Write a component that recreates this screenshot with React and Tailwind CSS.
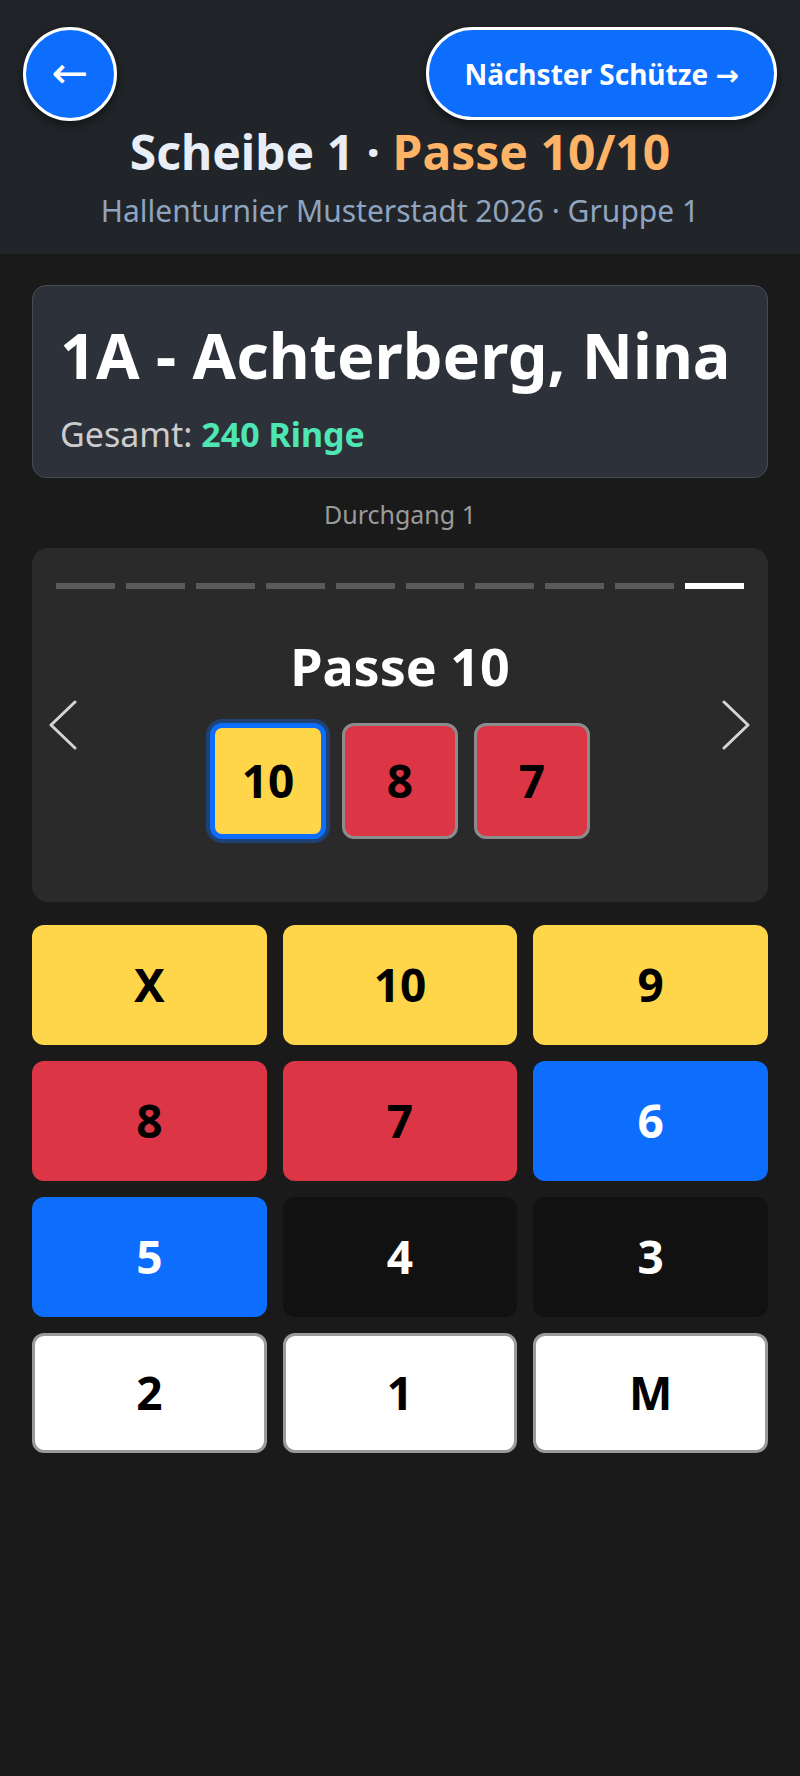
import React from 'react'

const font = { fontFamily: '"Noto Sans", "DejaVu Sans", sans-serif' }

const keys = [
  { label: 'X', cls: 'bg-[#ffd54a] text-black' },
  { label: '10', cls: 'bg-[#ffd54a] text-black' },
  { label: '9', cls: 'bg-[#ffd54a] text-black' },
  { label: '8', cls: 'bg-[#dc3545] text-black' },
  { label: '7', cls: 'bg-[#dc3545] text-black' },
  { label: '6', cls: 'bg-[#0d6efd] text-white' },
  { label: '5', cls: 'bg-[#0d6efd] text-white' },
  { label: '4', cls: 'bg-[#111111] text-white' },
  { label: '3', cls: 'bg-[#111111] text-white' },
  { label: '2', cls: 'bg-white text-black border-[3px] border-[#9a9a9a]' },
  { label: '1', cls: 'bg-white text-black border-[3px] border-[#9a9a9a]' },
  { label: 'M', cls: 'bg-white text-black border-[3px] border-[#9a9a9a]' },
]

function Chevron({ dir }) {
  const pts = dir === 'left' ? '27,2 3,25 27,48' : '2,2 26,25 2,48'
  return (
    <svg width="29" height="50" viewBox="0 0 29 50" fill="none">
      <polyline points={pts} stroke="#d4d4d4" strokeWidth="3" strokeLinecap="round" strokeLinejoin="round" />
    </svg>
  )
}

export default function App() {
  return (
    <div className="min-h-screen bg-[#1a1a1a]" style={font}>
      {/* Header */}
      <header className="bg-[#212529] h-[254px] px-[23px] pt-[27px]">
        <div className="flex items-start justify-between">
          <button className="w-[94px] h-[94px] rounded-full bg-[#0d6efd] border-[3px] border-white text-white flex items-center justify-center shadow-[0_4px_12px_rgba(0,0,0,0.5)]">
            <span className="text-[44px] leading-none font-normal -mt-[2px]" style={{ fontFamily: '"DejaVu Sans", sans-serif' }}>←</span>
          </button>
          <button className="h-[93px] px-[35px] rounded-full bg-[#0d6efd] border-[3px] border-white text-white text-[28px] font-bold flex items-center whitespace-nowrap shadow-[0_4px_12px_rgba(0,0,0,0.5)]">
            Nächster Schütze →
          </button>
        </div>
        <h1 className="text-center text-[48px] font-bold leading-[1.2] mt-[2px] text-[#e9eef6]">
          Scheibe 1 · <span className="text-[#ffb366]">Passe 10/10</span>
        </h1>
        <p className="text-center text-[30px] leading-[1.2] mt-[12px] text-[#8fa4bf]">
          Hallenturnier Musterstadt 2026 · Gruppe 1
        </p>
      </header>

      <main className="px-[32px] pt-[31px] pb-10">
        {/* Shooter card */}
        <section className="bg-[#2d3139] border border-[#474d56] rounded-[14px] px-[27px] pt-[31px] pb-[23px]">
          <h2 className="text-[63px] font-bold leading-[1.2] text-white whitespace-nowrap">1A - Achterberg, Nina</h2>
          <p className="text-[34px] leading-[1.2] mt-[21px] text-[#cccccc]">
            Gesamt: <span className="font-bold text-[#4ee6b2]">240 Ringe</span>
          </p>
        </section>

        <p className="text-center text-[25px] leading-[1.2] mt-[21px] text-[#9a9a9a]">Durchgang 1</p>

        {/* Passe card */}
        <section className="relative bg-[#2a2a2a] rounded-[16px] mt-[19px] px-[24px] pt-[35px] pb-[63px]">
          <div className="flex gap-[11px]">
            {Array.from({ length: 10 }).map((_, i) => (
              <div key={i} className={i === 9 ? 'flex-1 h-[6px] bg-white' : 'flex-1 h-[6px] bg-[#5a5a5a]'} />
            ))}
          </div>
          <h3 className="text-center text-[52px] font-bold leading-[1.2] mt-[46px] text-white">Passe 10</h3>
          <div className="flex justify-center gap-4 mt-[25px]">
            <div className="w-[116px] h-[116px] rounded-[12px] border-[5px] border-[#0d6efd] ring-4 ring-[#0d6efd]/35 bg-[#ffd54a] flex items-center justify-center text-[46px] font-bold text-black">
              10
            </div>
            <div className="w-[116px] h-[116px] rounded-[12px] border-[3px] border-[#8c8c8c] bg-[#dc3545] flex items-center justify-center text-[46px] font-bold text-black">
              8
            </div>
            <div className="w-[116px] h-[116px] rounded-[12px] border-[3px] border-[#8c8c8c] bg-[#dc3545] flex items-center justify-center text-[46px] font-bold text-black">
              7
            </div>
          </div>
          <button className="absolute left-[16px] top-1/2 -translate-y-1/2">
            <Chevron dir="left" />
          </button>
          <button className="absolute right-[17px] top-1/2 -translate-y-1/2">
            <Chevron dir="right" />
          </button>
        </section>

        {/* Keypad */}
        <div className="grid grid-cols-3 gap-4 mt-[23px]">
          {keys.map((k) => (
            <button
              key={k.label}
              className={'h-[120px] rounded-[12px] flex items-center justify-center text-[46px] font-bold ' + k.cls}
            >
              {k.label}
            </button>
          ))}
        </div>
      </main>
    </div>
  )
}
